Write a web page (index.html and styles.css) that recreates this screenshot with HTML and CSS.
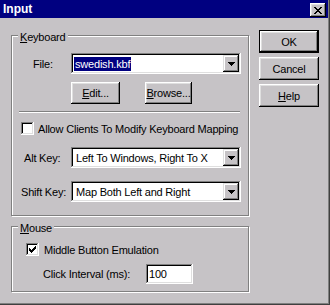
FILE: index.html
```html
<!DOCTYPE html>
<html lang="en">
<head>
    <meta charset="UTF-8">
    <title>Input</title>
    <link rel="stylesheet" href="styles.css">
</head>
<body>
    <div class="window">
        <div class="titlebar">
            <span class="title">Input</span>
            <span class="close-btn">
                <svg width="8" height="7" viewBox="0 0 8 7" shape-rendering="crispEdges">
                    <path d="M0 0h2v1H0zM6 0h2v1H6zM1 1h2v1H1zM5 1h2v1H5zM2 2h4v1H2zM3 3h2v1H3zM2 4h4v1H2zM1 5h2v1H1zM5 5h2v1H5zM0 6h2v1H0zM6 6h2v1H6z" fill="#000"/>
                </svg>
            </span>
        </div>

        <div class="dialog">
            <div class="groups">
                <div class="group keyboard">
                    <span class="group-label"><u>K</u>eyboard</span>

                    <div class="row file-row">
                        <span class="lbl">File:</span>
                        <div class="combo">
                            <span class="combo-text"><span class="sel">swedish.kbf</span></span>
                            <span class="drop"><svg width="7" height="4" viewBox="0 0 7 4" shape-rendering="crispEdges"><path d="M0 0h7v1H0zM1 1h5v1H1zM2 2h3v1H2zM3 3h1v1H3z" fill="#000"/></svg></span>
                        </div>
                    </div>

                    <div class="btn-row">
                        <button class="btn edit"><u>E</u>dit...</button>
                        <button class="btn browse"><u>B</u>rowse...</button>
                    </div>

                    <div class="sep"></div>

                    <div class="check-row">
                        <span class="checkbox"></span>
                        <span>Allow Clients To Modify Keyboard Mapping</span>
                    </div>

                    <div class="row alt-row">
                        <span class="lbl">Alt Key:</span>
                        <div class="combo">
                            <span class="combo-text">Left To Windows, Right To X</span>
                            <span class="drop"><svg width="7" height="4" viewBox="0 0 7 4" shape-rendering="crispEdges"><path d="M0 0h7v1H0zM1 1h5v1H1zM2 2h3v1H2zM3 3h1v1H3z" fill="#000"/></svg></span>
                        </div>
                    </div>

                    <div class="row shift-row">
                        <span class="lbl">Shift Key:</span>
                        <div class="combo">
                            <span class="combo-text">Map Both Left and Right</span>
                            <span class="drop"><svg width="7" height="4" viewBox="0 0 7 4" shape-rendering="crispEdges"><path d="M0 0h7v1H0zM1 1h5v1H1zM2 2h3v1H2zM3 3h1v1H3z" fill="#000"/></svg></span>
                        </div>
                    </div>
                </div>

                <div class="group mouse">
                    <span class="group-label"><u>M</u>ouse</span>

                    <div class="check-row">
                        <span class="checkbox">
                            <svg width="7" height="7" viewBox="0 0 7 7" shape-rendering="crispEdges">
                                <path d="M0 2h1v3H0zM1 3h1v3H1zM2 4h1v3H2zM3 3h1v3H3zM4 2h1v3H4zM5 1h1v3H5zM6 0h1v3H6z" fill="#000"/>
                            </svg>
                        </span>
                        <span>Middle Button Emulation</span>
                    </div>

                    <div class="row click-row">
                        <span class="lbl">Click Interval (ms):</span>
                        <div class="field">100</div>
                    </div>
                </div>
            </div>

            <div class="buttons">
                <button class="btn default">OK</button>
                <button class="btn">Cancel</button>
                <button class="btn"><u>H</u>elp</button>
            </div>
        </div>
    </div>
</body>
</html>
```

FILE: styles.css
```css
body {
    margin: 0;
    font-family: "Liberation Sans", Arial, sans-serif;
    font-size: 11px;
    letter-spacing: -0.2px;
    color: #000;
}
u {
    text-decoration: underline;
    text-underline-offset: 1px;
}
.window {
    width: 330px;
    height: 305px;
    box-sizing: border-box;
    background: #c6c3c6;
    border-right: 1px solid #404040;
    border-bottom: 1px solid #404040;
    padding: 0 1px 1px 0;
    box-shadow: inset -1px -1px #808080;
}
.titlebar {
    height: 18px;
    background: #000080;
    display: flex;
    align-items: center;
    justify-content: space-between;
    padding: 0 2px 0 3px;
}
.title {
    color: #fff;
    font-weight: bold;
    font-size: 12px;
    letter-spacing: 0;
}
.close-btn {
    width: 16px;
    height: 14px;
    margin-top: 2px;
    display: flex;
    align-items: center;
    justify-content: center;
    background: #c6c3c6;
    box-shadow: inset -1px -1px #000, inset 1px 1px #fff, inset -2px -2px #808080, inset 2px 2px #dfdfdf;
}
.dialog {
    display: flex;
    align-items: flex-start;
    padding-left: 11px;
    gap: 10px;
}
.groups {
    width: 238px;
    padding-top: 17px;
}
.group {
    position: relative;
    box-sizing: border-box;
    border: 1px solid #808080;
    box-shadow: 1px 1px #fff, inset 1px 1px #fff;
}
.keyboard {
    height: 181px;
}
.mouse {
    height: 66px;
    margin-top: 10px;
}
.group-label {
    position: absolute;
    top: -5px;
    left: 6px;
    padding: 0 2px;
    line-height: 13px;
    background: #c6c3c6;
}
.row {
    display: flex;
    align-items: center;
}
.lbl {
    width: 59px;
    box-sizing: border-box;
    white-space: nowrap;
}
.file-row {
    margin-top: 17px;
}
.file-row .lbl {
    padding-left: 21px;
}
.alt-row {
    margin-top: 12px;
}
.alt-row .lbl {
    padding-left: 12px;
}
.shift-row {
    margin-top: 13px;
}
.shift-row .lbl {
    padding-left: 9px;
}
.combo {
    width: 170px;
    height: 21px;
    box-sizing: border-box;
    padding: 2px;
    display: flex;
    background: #fff;
    box-shadow: inset -1px -1px #fff, inset 1px 1px #808080, inset -2px -2px #dfdfdf, inset 2px 2px #000;
}
.combo-text {
    flex: 1;
    display: flex;
    align-items: center;
    padding-left: 3px;
    white-space: nowrap;
    overflow: hidden;
}
.sel {
    margin-left: -2px;
    padding: 0 1px;
    line-height: 14px;
    background: #000080;
    color: #fff;
}
.drop {
    width: 16px;
    height: 17px;
    display: flex;
    align-items: center;
    justify-content: center;
    background: #c6c3c6;
    box-shadow: inset -1px -1px #000, inset 1px 1px #dfdfdf, inset -2px -2px #808080, inset 2px 2px #fff;
}
.btn {
    font: inherit;
    letter-spacing: inherit;
    color: #000;
    border: 0;
    padding: 0;
    width: 60px;
    height: 23px;
    background: #c6c3c6;
    box-shadow: inset -1px -1px #000, inset 1px 1px #fff, inset -2px -2px #808080, inset 2px 2px #dfdfdf;
}
.btn.default {
    box-shadow: inset 0 0 0 1px #000, inset -2px -2px #000, inset 2px 2px #fff, inset -3px -3px #808080, inset 3px 3px #dfdfdf;
}
.btn-row {
    display: flex;
    margin-top: 8px;
    padding-left: 59px;
    gap: 25px;
}
.btn-row .btn {
    height: 22px;
}
.btn.edit {
    width: 49px;
}
.btn.browse {
    width: 47px;
}
.sep {
    width: 221px;
    height: 1px;
    margin: 7px 0 0 7px;
    background: #808080;
    border-bottom: 1px solid #fff;
}
.check-row {
    display: flex;
    align-items: center;
    gap: 4px;
    height: 13px;
    white-space: nowrap;
}
.keyboard .check-row {
    margin-top: 9px;
    padding-left: 9px;
}
.mouse .check-row {
    margin-top: 16px;
    padding-left: 14px;
    gap: 5px;
}
.checkbox {
    width: 13px;
    height: 13px;
    box-sizing: border-box;
    display: flex;
    align-items: center;
    justify-content: center;
    background: #fff;
    box-shadow: inset -1px -1px #fff, inset 1px 1px #808080, inset -2px -2px #dfdfdf, inset 2px 2px #000;
}
.click-row {
    margin-top: 8px;
}
.click-row .lbl {
    width: 134px;
    padding-left: 31px;
}
.field {
    width: 47px;
    height: 20px;
    box-sizing: border-box;
    padding: 0 3px;
    display: flex;
    align-items: center;
    background: #fff;
    box-shadow: inset -1px -1px #fff, inset 1px 1px #808080, inset -2px -2px #dfdfdf, inset 2px 2px #000;
}
.buttons {
    display: flex;
    flex-direction: column;
    gap: 4px;
    padding-top: 12px;
}
```
